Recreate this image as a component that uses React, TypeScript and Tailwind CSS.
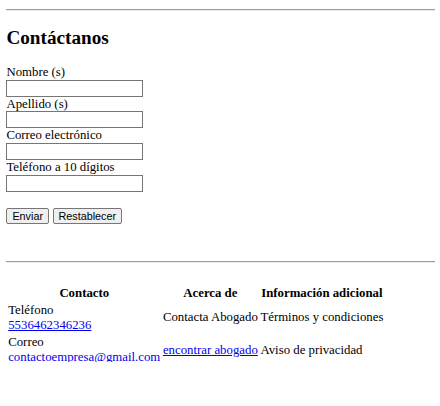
const FIELDS = ['Nombre (s)', 'Apellido (s)', 'Correo electrónico', 'Teléfono a 10 dígitos'];

function Rule({ className = '' }: { className?: string }) {
  return <hr className={`h-0 border-0 border-t border-b border-t-[#9a9a9a] border-b-[#eeeeee] ${className}`} />;
}

export default function App() {
  return (
    <div className="pl-[6.4px] pr-[4.8px] pt-[9px] font-['Liberation_Serif',serif] text-[12.8px] leading-[14.7px] text-black bg-white min-h-screen">
      <Rule />
      <h2 className="mt-[16px] mb-[16px] text-[19.2px] font-bold leading-[22px]">Contáctanos</h2>

      <form onSubmit={(e) => e.preventDefault()}>
        {FIELDS.map((label) => (
          <div key={label}>
            <label className="block">{label}</label>
            <input
              type="text"
              className="block w-[137px] h-[17px] border border-[#767676] bg-white px-[1.6px] font-['Liberation_Sans',sans-serif] text-[10.7px] outline-none"
            />
          </div>
        ))}

        <div className="mt-[16px] flex gap-[3.5px] font-['Liberation_Sans',sans-serif] text-[10.8px] leading-[12px]">
          <button type="submit" className="h-[16px] px-[5px] border border-[#767676] rounded-[2px] bg-[#efefef] text-black">
            Enviar
          </button>
          <button type="reset" className="h-[16px] px-[5px] border border-[#767676] rounded-[2px] bg-[#efefef] text-black">
            Restablecer
          </button>
        </div>
      </form>

      <Rule className="mt-[37px]" />

      <table className="mt-[21px] border-separate border-spacing-[1.6px]">
        <thead>
          <tr>
            <th className="p-[0.8px] font-bold text-center">Contacto</th>
            <th className="p-[0.8px] font-bold text-center">Acerca de</th>
            <th className="p-[0.8px] font-bold text-center">Información adicional</th>
          </tr>
        </thead>
        <tbody>
          <tr>
            <td className="p-[0.8px] align-middle">
              Teléfono
              <br />
              <a href="#" className="text-[#0000ee] underline">5536462346236</a>
            </td>
            <td className="p-[0.8px] align-middle">Contacta Abogado</td>
            <td className="p-[0.8px] align-middle">Términos y condiciones</td>
          </tr>
          <tr>
            <td className="p-[0.8px] align-middle">
              Correo
              <span className="block h-[16px]">
                <span className="block h-[12.5px] overflow-hidden text-[#0000ee]">contactoempresa@gmail.com</span>
              </span>
            </td>
            <td className="p-[0.8px] align-middle">
              <a href="#" className="text-[#0000ee] underline">encontrar abogado</a>
            </td>
            <td className="p-[0.8px] align-middle">Aviso de privacidad</td>
          </tr>
        </tbody>
      </table>
    </div>
  );
}
